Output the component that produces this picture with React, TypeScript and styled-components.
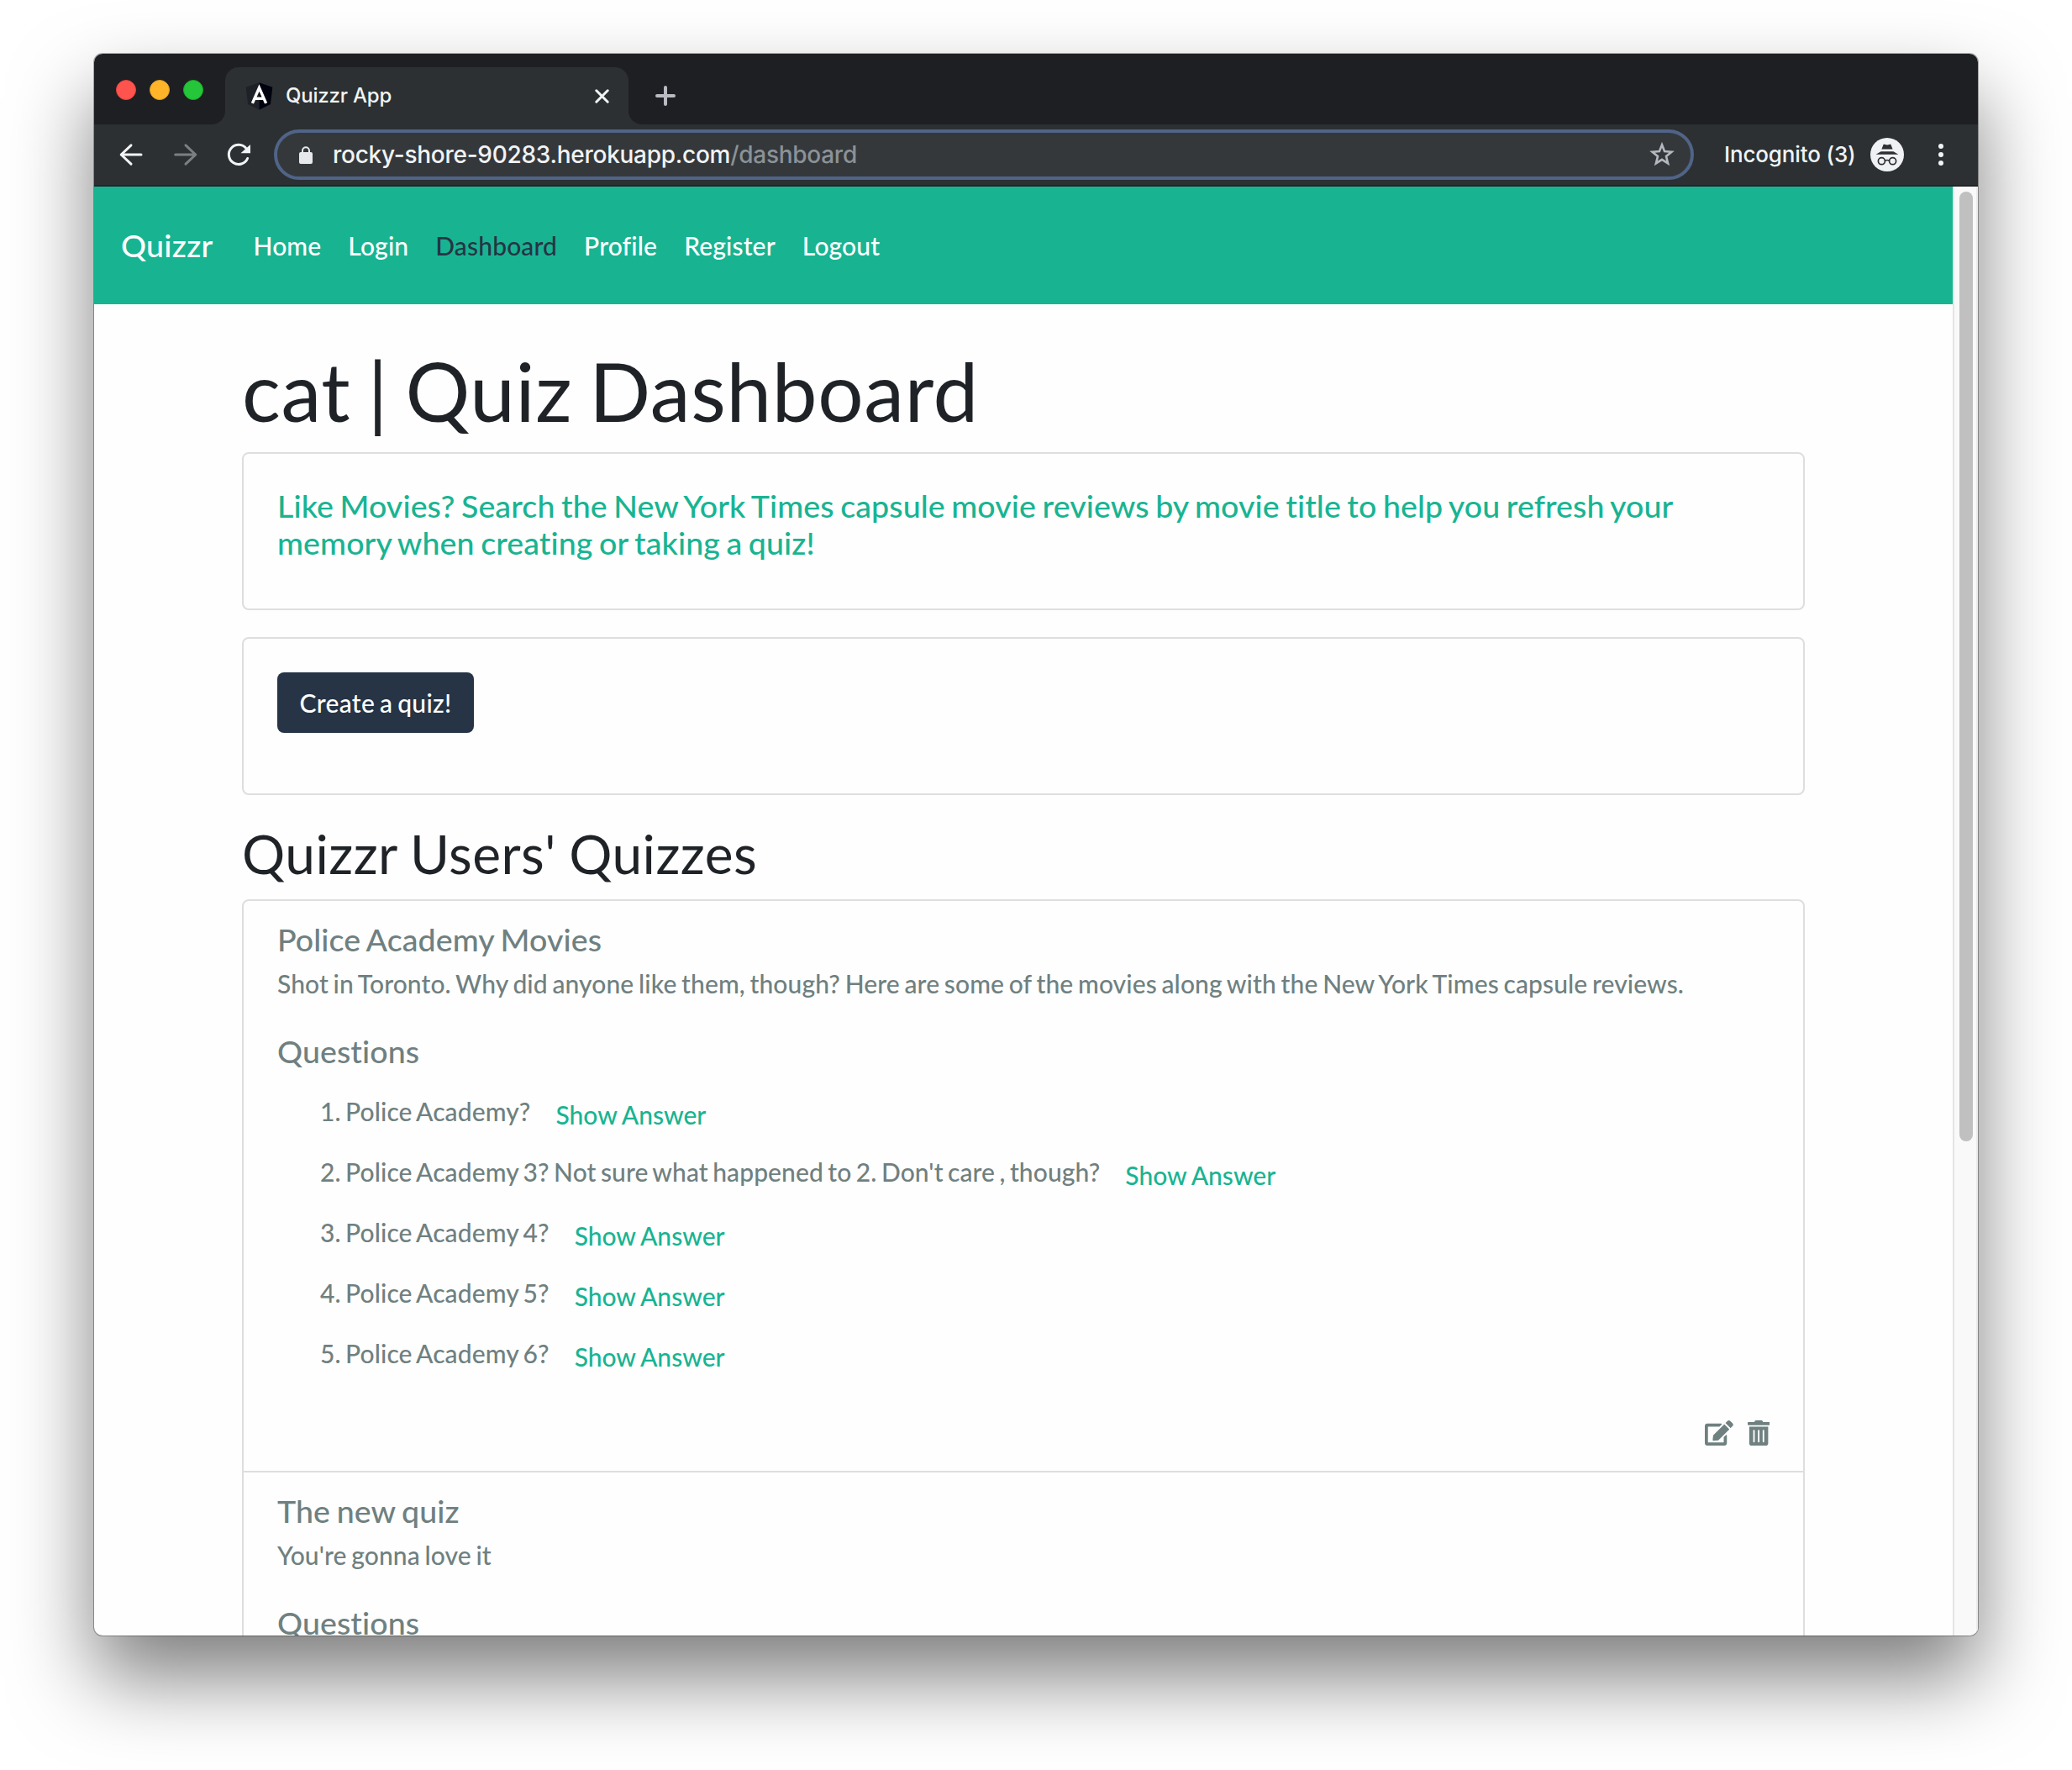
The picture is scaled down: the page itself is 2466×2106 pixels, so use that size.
import React from "react";
import styled, { createGlobalStyle } from "styled-components";
import { FaEdit, FaTrashAlt } from "react-icons/fa";

const GlobalStyle = createGlobalStyle`
  *, *::before, *::after { box-sizing: border-box; }
  body {
    margin: 0;
    background: #fff;
    font-family: Lato, "Liberation Sans", sans-serif;
    font-size: 30px;
    line-height: 45px;
  }
  h1, h2, h3, p, ol { margin: 0; padding: 0; font-weight: inherit; }
  button {
    font: inherit;
    letter-spacing: inherit;
    word-spacing: inherit;
    border: 0;
    background: none;
    margin: 0;
  }
  a { color: inherit; text-decoration: none; }
  svg { display: block; flex: none; }
`;

const Desktop = styled.div`
  width: 2466px;
  height: 2106px;
  padding: 64px 112px 160px;
  overflow: hidden;
  background: #fff;
`;

const BrowserWindow = styled.div`
  width: 2242px;
  height: 1882px;
  display: flex;
  flex-direction: column;
  overflow: hidden;
  border-radius: 10px;
  background: #fefefe;
  box-shadow: 0 0 0 1px rgba(0, 0, 0, 0.3), 0 50px 96px rgba(0, 0, 0, 0.51);
`;

/* ---------- browser chrome ---------- */

const TabStrip = styled.div`
  height: 84px;
  flex: none;
  display: flex;
  padding: 16px 0 0 26px;
  background: #1e1f23;
`;

const TrafficLights = styled.div`
  display: flex;
  gap: 16px;
  width: 130px;
  padding-top: 15px;
`;

const Light = styled.span<{ $fill: string; $ring: string }>`
  width: 24px;
  height: 24px;
  border-radius: 50%;
  background: ${(p) => p.$fill};
  border: 1px solid ${(p) => p.$ring};
`;

const Tab = styled.div`
  position: relative;
  width: 480px;
  height: 68px;
  display: flex;
  align-items: center;
  padding: 0 23px 0 24px;
  border-radius: 16px 16px 0 0;
  background: #2c3032;
  color: #f1f3f4;
  font: 400 24px/30px Inter, sans-serif;

  &::before,
  &::after {
    content: "";
    position: absolute;
    bottom: 0;
    width: 16px;
    height: 16px;
  }
  &::before {
    right: 100%;
    background: radial-gradient(circle at 0 0, transparent 15.5px, #2c3032 16.5px);
  }
  &::after {
    left: 100%;
    background: radial-gradient(circle at 100% 0, transparent 15.5px, #2c3032 16.5px);
  }
`;

const TabTitle = styled.span`
  flex: 1;
  margin-left: 15px;
  font-weight: 500;
  letter-spacing: -0.2px;
`;

const NewTab = styled.button`
  padding: 22px 32px;
  height: 68px;
`;

const Toolbar = styled.div`
  height: 74px;
  flex: none;
  display: flex;
  align-items: center;
  padding: 0 38px 2px 28px;
  background: #2c3032;
  box-shadow: inset 0 -2px #212427;
  font: 400 28px/34px Inter, sans-serif;
  color: #f1f3f4;
`;

const NavButtons = styled.div`
  display: flex;
  gap: 32px;
  width: 186px;
`;

const Omnibox = styled.div`
  width: 1690px;
  height: 60px;
  display: flex;
  align-items: center;
  padding: 0 18px 0 26px;
  border: 4px solid #4f6487;
  border-radius: 30px;
  background: #35383b;
`;

const Url = styled.span`
  flex: 1;
  margin-left: 24px;
  font-weight: 500;
  letter-spacing: -0.27px;
`;

const UrlPath = styled.span`
  color: #8b9298;
`;

const IncognitoLabel = styled.span`
  width: 174px;
  margin-left: 36px;
  white-space: nowrap;
  font-size: 26px;
  font-weight: 500;
  letter-spacing: -0.15px;
`;

const MenuDots = styled.div`
  display: flex;
  flex-direction: column;
  gap: 4px;
  margin-left: 41px;
`;

const Dot = styled.span`
  width: 6px;
  height: 6px;
  border-radius: 50%;
  background: #f1f3f4;
`;

/* ---------- page ---------- */

const Viewport = styled.div`
  flex: 1;
  min-height: 0;
  display: flex;
`;

const Page = styled.div`
  flex: 1;
  height: 1724px;
  overflow: hidden;
  font-weight: 500;
  letter-spacing: 0.1px;
  word-spacing: -1.95px;
`;

const ScrollTrack = styled.div`
  width: 30px;
  padding: 6px 4px 0 6px;
  border-left: 2px solid #e4e4e4;
  border-right: 2px solid #ececec;
  background: #f9f9f9;
`;

const ScrollThumb = styled.div`
  width: 16px;
  height: 1130px;
  border-radius: 8px;
  background: #c0c0c0;
`;

const Navbar = styled.nav`
  height: 140px;
  display: flex;
  align-items: center;
  padding: 0 32px;
  background: #18b492;
  color: #fff;
`;

const Brand = styled.a`
  margin-right: 32px;
  padding-bottom: 2px;
  font-size: 37.5px;
  letter-spacing: 0.008em;
`;

const NavLink = styled.a<{ $active?: boolean }>`
  padding: 0 16px;
  letter-spacing: 0.15px;
  color: ${(p) => (p.$active ? "#263445" : "#fff")};
`;

const Container = styled.main`
  width: 1860px;
  margin: 0 auto;
  padding-top: 45px;
`;

const PageTitle = styled.h1`
  margin-bottom: 16px;
  font-size: 96px;
  font-weight: 400;
  line-height: 115px;
  letter-spacing: 0.0073em;
  word-spacing: -0.054em;
  color: #1f2327;
`;

const SectionTitle = styled.h2`
  margin-bottom: 16px;
  font-size: 64px;
  font-weight: 400;
  line-height: 76px;
  letter-spacing: 0.0075em;
  word-spacing: -0.022em;
  color: #1f2327;
`;

const Card = styled.section`
  height: 188px;
  margin-bottom: 32px;
  padding: 40px;
  border: 2px solid #dedede;
  border-radius: 8px;
`;

const MovieLink = styled.a`
  display: block;
  font-size: 37.5px;
  line-height: 44px;
  word-spacing: -2.05px;
  color: #18b492;
`;

const CreateButton = styled.button`
  width: 234px;
  height: 72px;
  padding: 0;
  border-radius: 8px;
  background: #263445;
  color: #fff;
  letter-spacing: 0.3px;
  white-space: nowrap;
`;

const QuizList = styled.div`
  border: 2px solid #dedede;
  border-radius: 8px;
  color: #6f8080;
`;

const QuizItem = styled.article`
  padding: 24px 40px 30px;

  & + & {
    border-top: 2px solid #dedede;
  }
`;

const QuizHeading = styled.h3`
  font-size: 37.5px;
  line-height: 44px;
`;

const QuizDescription = styled.p`
  margin: 8px 0 36px;
`;

const QuestionList = styled.ol`
  margin-top: 17px;
  padding-left: 51px;
  list-style: none;
  word-spacing: -2.25px;
`;

const QuestionRow = styled.li`
  height: 72px;
  display: flex;
  gap: 30px;
  padding-top: 10px;
`;

const ShowAnswer = styled.button`
  height: 45px;
  padding: 0;
  margin-top: 4px;
  color: #18b492;
  letter-spacing: 0;
  word-spacing: -1px;
`;

const Actions = styled.div`
  display: flex;
  justify-content: flex-end;
  gap: 17px;
  margin-top: 40px;
`;

const EditIcon = styled(FaEdit)`
  width: 33.75px;
  height: 30px;
`;

const TrashIcon = styled(FaTrashAlt)`
  width: 26.25px;
  height: 30px;
`;

/* ---------- icons ---------- */

const Favicon = () => (
  <svg width="33" height="33" viewBox="25 28 200 204">
    <path d="M125 30 27 63l15 125 83 43z" fill="#1f2128" />
    <path d="M125 30l98 33-15 125-83 43z" fill="#00030f" />
    <path d="M75 182 125 68l50 114M93 147h64" fill="none" stroke="#fff" strokeWidth="21" />
  </svg>
);

const CloseIcon = () => (
  <svg width="17" height="17" viewBox="0 0 17 17" stroke="#f1f3f4" strokeWidth="3" strokeLinecap="round">
    <path d="M1.8 1.8l13.4 13.4M15.2 1.8 1.8 15.2" />
  </svg>
);

const PlusIcon = () => (
  <svg width="24" height="24" viewBox="0 0 24 24" stroke="#b9bac2" strokeWidth="4" strokeLinecap="round">
    <path d="M12 2v20M2 12h20" />
  </svg>
);

const ArrowIcon = ({ color, flip }: { color: string; flip?: boolean }) => (
  <svg width="32" height="32" viewBox="0 0 32 32" fill="none" stroke={color} strokeWidth="3" strokeLinecap="round" strokeLinejoin="round">
    <path d={flip ? "M4.7 16h24M17 4.8 28.8 16 17 27.2" : "M28 16H4.2M16 4.8 4.2 16 16 27.2"} />
  </svg>
);

const ReloadIcon = () => (
  <svg width="32" height="32" viewBox="0 0 32 32">
    <path d="M26.6 20.5A11.6 11.6 0 1 1 25.2 8.9" fill="none" stroke="#f1f3f4" strokeWidth="3" strokeLinecap="round" />
    <path d="M30 4v10.3H18.5z" fill="#f1f3f4" />
  </svg>
);

const LockIcon = () => (
  <svg width="16" height="21" viewBox="0 0 16 21">
    <path d="M4 9V5.2a4 4 0 0 1 8 0V9" fill="none" stroke="#e6e8ec" strokeWidth="2" />
    <rect y="7" width="16" height="14" rx="2" fill="#e6e8ec" />
  </svg>
);

const StarIcon = () => (
  <svg width="32" height="32" viewBox="0 0 32 32">
    <path
      d="M16 4.2l3.1 7.9 8.4.6-6.5 5.4 2.1 8.3L16 21.9l-7.1 4.5 2.1-8.3-6.5-5.4 8.4-.6z"
      fill="none"
      stroke="#b4b8be"
      strokeWidth="2.6"
    />
  </svg>
);

const IncognitoIcon = () => (
  <svg width="40" height="40" viewBox="0 0 40 40">
    <circle cx="20" cy="20" r="20" fill="#f0f1f4" />
    <path d="M15.8 7.4l4.2 1.2 4.2-1.2 2.4 6.2H13.4z" fill="#2c3032" />
    <path d="M12.6 16.2h14.8l6 3.6H6.6z" fill="#2c3032" />
    <g fill="none" stroke="#2c3032" strokeWidth="1.7">
      <circle cx="13.4" cy="27.7" r="4" />
      <circle cx="26.6" cy="27.7" r="4" />
      <path d="M17.3 27.4q2.7-1.8 5.4 0" />
    </g>
  </svg>
);

/* ---------- content ---------- */

type Quiz = { title: string; description: string; questions: string[] };

const navItems = ["Home", "Login", "Dashboard", "Profile", "Register", "Logout"];

const quizzes: Quiz[] = [
  {
    title: "Police Academy Movies",
    description:
      "Shot in Toronto. Why did anyone like them, though? Here are some of the movies along with the New York Times capsule reviews.",
    questions: [
      "Police Academy?",
      "Police Academy 3? Not sure what happened to 2. Don't care , though?",
      "Police Academy 4?",
      "Police Academy 5?",
      "Police Academy 6?",
    ],
  },
  { title: "The new quiz", description: "You're gonna love it", questions: [] },
];

const QuizEntry = ({ quiz }: { quiz: Quiz }) => (
  <QuizItem>
    <QuizHeading>{quiz.title}</QuizHeading>
    <QuizDescription>{quiz.description}</QuizDescription>
    <QuizHeading>Questions</QuizHeading>
    {quiz.questions.length > 0 && (
      <>
        <QuestionList>
          {quiz.questions.map((question, i) => (
            <QuestionRow key={question}>
              <span>{`${i + 1}. ${question}`}</span>
              <ShowAnswer>Show Answer</ShowAnswer>
            </QuestionRow>
          ))}
        </QuestionList>
        <Actions>
          <EditIcon />
          <TrashIcon />
        </Actions>
      </>
    )}
  </QuizItem>
);

export default function App() {
  return (
    <Desktop>
      <GlobalStyle />
      <BrowserWindow>
        <TabStrip>
          <TrafficLights>
            <Light $fill="#ff544d" $ring="#e0443e" />
            <Light $fill="#ffb429" $ring="#dea123" />
            <Light $fill="#25c63a" $ring="#1aab29" />
          </TrafficLights>
          <Tab>
            <Favicon />
            <TabTitle>Quizzr App</TabTitle>
            <CloseIcon />
          </Tab>
          <NewTab aria-label="New tab">
            <PlusIcon />
          </NewTab>
        </TabStrip>
        <Toolbar>
          <NavButtons>
            <ArrowIcon color="#f1f3f4" />
            <ArrowIcon color="#7c7f82" flip />
            <ReloadIcon />
          </NavButtons>
          <Omnibox>
            <LockIcon />
            <Url>
              rocky-shore-90283.herokuapp.com<UrlPath>/dashboard</UrlPath>
            </Url>
            <StarIcon />
          </Omnibox>
          <IncognitoLabel>Incognito (3)</IncognitoLabel>
          <IncognitoIcon />
          <MenuDots>
            <Dot />
            <Dot />
            <Dot />
          </MenuDots>
        </Toolbar>
        <Viewport>
          <Page>
            <Navbar>
              <Brand>Quizzr</Brand>
              {navItems.map((item) => (
                <NavLink key={item} $active={item === "Dashboard"}>
                  {item}
                </NavLink>
              ))}
            </Navbar>
            <Container>
              <PageTitle>cat | Quiz Dashboard</PageTitle>
              <Card>
                <MovieLink>
                  Like Movies? Search the New York Times capsule movie reviews by movie title to help you refresh your
                  memory when creating or taking a quiz!
                </MovieLink>
              </Card>
              <Card>
                <CreateButton>Create a quiz!</CreateButton>
              </Card>
              <SectionTitle>Quizzr Users' Quizzes</SectionTitle>
              <QuizList>
                {quizzes.map((quiz) => (
                  <QuizEntry key={quiz.title} quiz={quiz} />
                ))}
              </QuizList>
            </Container>
          </Page>
          <ScrollTrack>
            <ScrollThumb />
          </ScrollTrack>
        </Viewport>
      </BrowserWindow>
    </Desktop>
  );
}
